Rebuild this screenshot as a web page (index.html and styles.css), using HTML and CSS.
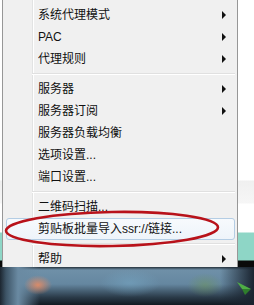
FILE: index.html
```html
<!DOCTYPE html>
<html lang="zh-CN">
<head>
  <meta charset="UTF-8">
  <meta name="viewport" content="width=device-width, initial-scale=1.0">
  <title>ShadowsocksR 菜单</title>
  <link rel="stylesheet" href="styles.css">
</head>
<body>
  <div class="desktop">
    <div class="menu">
      <div class="item"><span>系统代理模式</span><i class="arrow"></i></div>
      <div class="item"><span>PAC</span><i class="arrow"></i></div>
      <div class="item"><span>代理规则</span><i class="arrow"></i></div>
      <div class="sep"></div>
      <div class="item"><span>服务器</span><i class="arrow"></i></div>
      <div class="item"><span>服务器订阅</span><i class="arrow"></i></div>
      <div class="item"><span>服务器负载均衡</span></div>
      <div class="item"><span>选项设置...</span></div>
      <div class="item"><span>端口设置...</span></div>
      <div class="sep"></div>
      <div class="item"><span>二维码扫描...</span></div>
      <div class="item active"><span>剪贴板批量导入ssr://链接...</span></div>
      <div class="sep"></div>
      <div class="item"><span>帮助</span><i class="arrow"></i></div>
    </div>

    <!-- red hand-drawn circle around the import item -->
    <svg class="mark" width="254" height="267" viewBox="0 0 254 267">
      <ellipse cx="112" cy="229" rx="106" ry="17" fill="none" stroke="#b8121a" stroke-width="2.6" transform="rotate(-1 112 229)"/>
    </svg>
  </div>

  <div class="taskbar">
    <div class="blob"></div>
    <svg class="plane" width="16" height="16" viewBox="0 0 16 16">
      <path d="M1 2 L15 9 L6 9 Z" fill="#4fae45"/>
      <path d="M6 9 L15 9 L9 15 Z" fill="#2f7d2c"/>
    </svg>
  </div>
</body>
</html>
```
FILE: styles.css
```css
* { box-sizing: border-box; margin: 0; padding: 0; }

body {
  width: 254px; height: 305px; overflow: hidden; background: #fff;
  font-family: "Liberation Sans", "Noto Sans CJK SC", sans-serif; font-size: 12px; color: #111;
}

.desktop {
  position: relative; height: 267px; overflow: hidden; padding-left: 2px;
  background: linear-gradient(to bottom, #fff 0, #fff 180px, #f0f0f0 181px, #f6f6f6 203px, #fff 204px, #fff 232px, #8ed6c6 233px, #8ed6c6 260px, #0a0a0a 261px);
}

.menu {
  width: 236px; height: 290px; margin-top: -1px;
  padding: 4px 2px 0 3px;
  background-color: #f0f0f0;
  background-image: linear-gradient(to right, transparent 29px, #e2e3e3 29px, #e2e3e3 30px, #fff 30px, #fff 31px, transparent 31px);
  border: 1px solid #979797;
}

.item {
  height: 22px; display: flex; align-items: center; justify-content: space-between;
  padding: 0 8px 0 31px; border: 1px solid transparent; border-radius: 3px;
  white-space: nowrap;
}
.item span { line-height: 20px; }

.item.active {
  border-color: #b4cde4;
  background: linear-gradient(to bottom, #f7fafd, #eef4fa);
}

.arrow {
  width: 0; height: 0; border-left: 4px solid #111;
  border-top: 4px solid transparent; border-bottom: 4px solid transparent;
}

.sep {
  height: 8px; margin-left: 26px;
  background: linear-gradient(to bottom, transparent 3px, #e0e0e0 3px, #e0e0e0 4px, #fff 4px, #fff 5px, transparent 5px);
}

.mark { position: absolute; left: 0; top: 0; }

.taskbar {
  position: relative; height: 38px;
  background:
    radial-gradient(ellipse 20px 14px at 38px 18px, rgba(230,140,100,.9), rgba(230,140,100,0) 70%),
    radial-gradient(ellipse 30px 14px at 130px 16px, rgba(120,170,200,.5), rgba(120,170,200,0)),
    radial-gradient(ellipse 18px 12px at 205px 18px, rgba(110,150,90,.5), rgba(110,150,90,0)),
    linear-gradient(to right, #1c2630 0, #3d5466 6px, #6a8aa2 18px, transparent 40px, transparent 220px, #1a2430 254px),
    linear-gradient(to bottom, #26323c 0, #6f90a8 3px, #6587a0 45%, #2a3a48 80%, #111a22 100%);
}

.plane { position: absolute; left: 236px; top: 13px; }
```
